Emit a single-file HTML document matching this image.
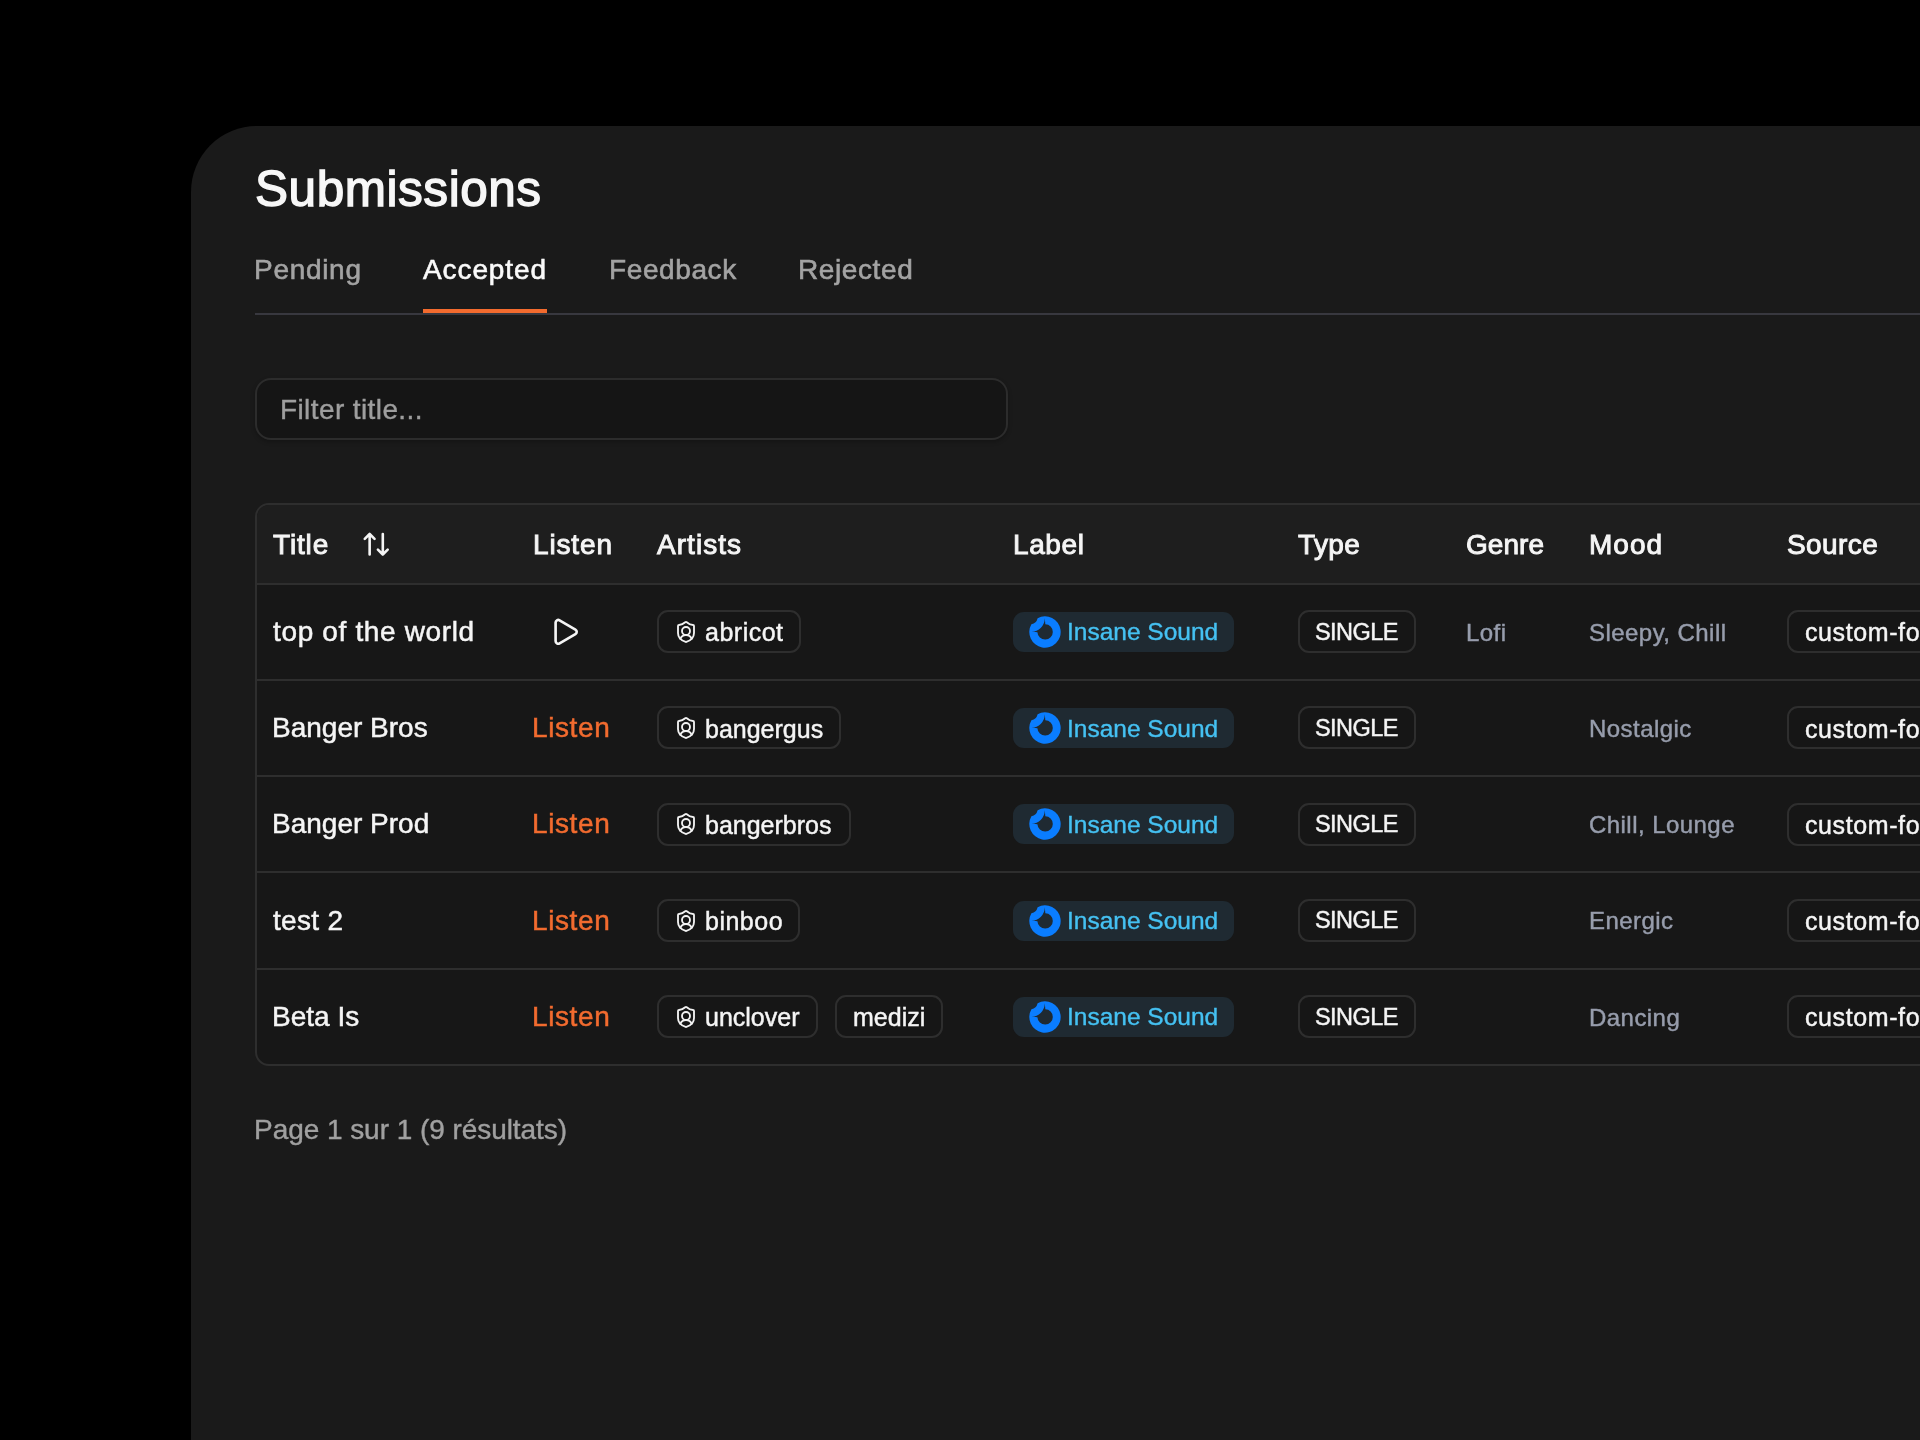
<!DOCTYPE html>
<html>
<head>
<meta charset="utf-8">
<style>
html,body{margin:0;padding:0;}
body{width:1920px;height:1440px;background:#000;overflow:hidden;position:relative;font-family:"Liberation Sans",sans-serif;}
.panel{position:absolute;left:191px;top:126px;width:1800px;height:1400px;background:#1a1a1a;border-top-left-radius:66px;overflow:hidden;}
.a{position:absolute;white-space:nowrap;line-height:1;will-change:transform;}
.title{font-size:49.5px;font-weight:400;color:#f7f7f7;letter-spacing:0.55px;-webkit-text-stroke:1.4px currentColor;}
.tab{font-size:28px;color:#a3a3a3;-webkit-text-stroke:0.6px currentColor;}
.tab.on{color:#fafafa;}
.hd{font-size:28px;font-weight:400;color:#f5f5f5;-webkit-text-stroke:0.95px currentColor;}
.cell{font-size:28px;color:#f5f5f5;-webkit-text-stroke:0.5px currentColor;}
.listen{font-size:28px;color:#f26b2f;-webkit-text-stroke:0.5px currentColor;}
.chip{position:absolute;box-sizing:border-box;border:2px solid #2e2e2e;background:#161616;border-radius:11px;height:43px;}
.ct{font-size:25px;color:#f5f5f5;-webkit-text-stroke:0.45px currentColor;}
.lab{position:absolute;background:#1f2a32;border-radius:11px;height:40px;width:221px;}
.lt{font-size:24.5px;color:#45c1f2;-webkit-text-stroke:0.4px currentColor;}
.gray{font-size:24px;color:#979dac;letter-spacing:0.45px;-webkit-text-stroke:0.45px currentColor;}
</style>
</head>
<body>
<div class="panel"></div>
<!-- header -->
<div class="a title" style="left:255px;top:164px">Submissions</div>
<div class="a tab" style="left:253.5px;top:255.8px;letter-spacing:0.7px">Pending</div>
<div class="a tab on" style="left:423px;top:255.8px;letter-spacing:0.9px">Accepted</div>
<div class="a tab" style="left:608.8px;top:255.8px;letter-spacing:0.6px">Feedback</div>
<div class="a tab" style="left:798px;top:255.8px;letter-spacing:0.6px">Rejected</div>
<div class="a" style="left:255px;top:313px;width:1700px;height:2px;background:#38383f"></div>
<div class="a" style="left:423px;top:309px;width:124px;height:4px;background:#f36b2e"></div>

<!-- filter -->
<div class="a" style="left:255px;top:378px;width:753px;height:62px;box-sizing:border-box;border:2px solid #2c2c2c;border-radius:16px;background:#151515;box-shadow:0 2px 4px rgba(0,0,0,0.25)"></div>
<div class="a" style="left:279.5px;top:396px;font-size:28px;color:#9e9e9e;letter-spacing:0.4px;-webkit-text-stroke:0.4px currentColor">Filter title...</div>

<!-- table -->
<div class="a" style="left:255px;top:503px;width:1700px;height:563px;box-sizing:border-box;border:2px solid #2e2e2e;border-radius:14px;background:#171717;overflow:hidden">
  <div class="a" style="left:0;top:0;width:100%;height:78px;background:#1e1e1e"></div>
  <div class="a" style="left:0;top:78px;width:100%;height:2px;background:#2e2e2e"></div>
  <div class="a" style="left:0;top:174px;width:100%;height:2px;background:#2e2e2e"></div>
  <div class="a" style="left:0;top:270px;width:100%;height:2px;background:#2e2e2e"></div>
  <div class="a" style="left:0;top:366px;width:100%;height:2px;background:#2e2e2e"></div>
  <div class="a" style="left:0;top:463px;width:100%;height:2px;background:#2e2e2e"></div>
</div>

<!-- header cells -->
<div class="a hd" style="left:273px;top:530.8px;letter-spacing:0.85px">Title</div>
<svg class="a" style="left:360px;top:530px" width="32" height="28" viewBox="0 0 32 28" fill="none" stroke="#f5f5f5" stroke-width="2.6" stroke-linecap="round" stroke-linejoin="round">
  <path d="M9.65 24.5V4M4.75 8.9L9.65 4L14.55 8.9"/>
  <path d="M22.8 4V24.5M17.9 19.6L22.8 24.5L27.7 19.6"/>
</svg>
<div class="a hd" style="left:532.75px;top:530.8px;letter-spacing:0.85px">Listen</div>
<div class="a hd" style="left:656.5px;top:530.8px;letter-spacing:1.05px">Artists</div>
<div class="a hd" style="left:1012.6px;top:530.8px;letter-spacing:0.6px">Label</div>
<div class="a hd" style="left:1298px;top:530.8px;letter-spacing:0.35px">Type</div>
<div class="a hd" style="left:1466px;top:530.8px;letter-spacing:0.05px">Genre</div>
<div class="a hd" style="left:1588.8px;top:530.8px;letter-spacing:1.0px">Mood</div>
<div class="a hd" style="left:1786.8px;top:530.8px;letter-spacing:0.4px">Source</div>

<!-- ROWS -->
<div class="a cell" style="left:273px;top:617.9px;letter-spacing:0.65px">top of the world</div>
<svg class="a" style="left:549px;top:615.8px" width="31.7" height="31.7" viewBox="0 0 24 24" fill="none" stroke="#f5f5f5" stroke-width="2" stroke-linecap="round" stroke-linejoin="round"><path d="M5 5a2 2 0 0 1 3.008-1.728l11.997 6.998a2 2 0 0 1 .003 3.458l-12 7A2 2 0 0 1 5 19z"/></svg>
<div class="chip" style="left:657px;top:610px;width:144px"></div>
<svg class="a" style="left:674.2px;top:619.9px" width="24" height="24" viewBox="0 0 24 24" fill="none" stroke="#f2f2f2" stroke-width="1.85" stroke-linecap="round" stroke-linejoin="round"><path d="M20 13c0 5-3.5 7.5-7.66 8.95a1 1 0 0 1-.67-.01C7.5 20.5 4 18 4 13V6a1 1 0 0 1 1-1c2 0 4.5-1.2 6.24-2.72a1.17 1.17 0 0 1 1.52 0C14.51 3.81 17 5 19 5a1 1 0 0 1 1 1z"/><path d="M6.376 18.91a6 6 0 0 1 11.249.003"/><circle cx="12" cy="11" r="4"/></svg>
<div class="a ct" style="left:705.4px;top:620.4px;letter-spacing:0.5px">abricot</div>
<div class="lab" style="left:1013px;top:612px"></div>
<svg class="a" style="left:1028.7px;top:616.0px" width="32" height="32" viewBox="0 0 32 32"><path fill="#0a7dff" fill-rule="evenodd" d="M8.63 2.14A15.7 15.7 0 1 1 2.4 8.15A8 8 0 0 0 8.63 2.14Z M15.8 2.2L16.3 8.2A7.7 7.7 0 1 1 8.41 16.3L2.5 15.6A13.3 13.3 0 0 0 15.8 2.2Z"/></svg>
<div class="a lt" style="left:1067.4px;top:620.3px;letter-spacing:0px">Insane Sound</div>
<div class="chip" style="left:1297.5px;top:610px;width:118px"></div>
<div class="a ct" style="left:1314.6px;top:620.8px;font-size:23.5px;letter-spacing:-0.55px">SINGLE</div>
<div class="a gray" style="left:1465.5px;top:620.8px">Lofi</div>
<div class="a gray" style="left:1589.3px;top:620.8px">Sleepy, Chill</div>
<div class="chip" style="left:1787px;top:610px;width:300px"></div>
<div class="a ct" style="left:1804.5px;top:620.4px;letter-spacing:0.6px">custom-fo</div>
<div class="a cell" style="left:271.5px;top:714.1px;letter-spacing:0px">Banger Bros</div>
<div class="a listen" style="left:532.3px;top:714.1px;letter-spacing:0.6px">Listen</div>
<div class="chip" style="left:657px;top:706px;width:184px"></div>
<svg class="a" style="left:674.2px;top:716.1px" width="24" height="24" viewBox="0 0 24 24" fill="none" stroke="#f2f2f2" stroke-width="1.85" stroke-linecap="round" stroke-linejoin="round"><path d="M20 13c0 5-3.5 7.5-7.66 8.95a1 1 0 0 1-.67-.01C7.5 20.5 4 18 4 13V6a1 1 0 0 1 1-1c2 0 4.5-1.2 6.24-2.72a1.17 1.17 0 0 1 1.52 0C14.51 3.81 17 5 19 5a1 1 0 0 1 1 1z"/><path d="M6.376 18.91a6 6 0 0 1 11.249.003"/><circle cx="12" cy="11" r="4"/></svg>
<div class="a ct" style="left:705.4px;top:716.6px;letter-spacing:0px">bangergus</div>
<div class="lab" style="left:1013px;top:708px"></div>
<svg class="a" style="left:1028.7px;top:712.2px" width="32" height="32" viewBox="0 0 32 32"><path fill="#0a7dff" fill-rule="evenodd" d="M8.63 2.14A15.7 15.7 0 1 1 2.4 8.15A8 8 0 0 0 8.63 2.14Z M15.8 2.2L16.3 8.2A7.7 7.7 0 1 1 8.41 16.3L2.5 15.6A13.3 13.3 0 0 0 15.8 2.2Z"/></svg>
<div class="a lt" style="left:1067.4px;top:716.5px;letter-spacing:0px">Insane Sound</div>
<div class="chip" style="left:1297.5px;top:706px;width:118px"></div>
<div class="a ct" style="left:1314.6px;top:717.0px;font-size:23.5px;letter-spacing:-0.55px">SINGLE</div>
<div class="a gray" style="left:1589.3px;top:717.0px">Nostalgic</div>
<div class="chip" style="left:1787px;top:706px;width:300px"></div>
<div class="a ct" style="left:1804.5px;top:716.6px;letter-spacing:0.6px">custom-fo</div>
<div class="a cell" style="left:271.5px;top:810.3px;letter-spacing:0px">Banger Prod</div>
<div class="a listen" style="left:532.3px;top:810.3px;letter-spacing:0.6px">Listen</div>
<div class="chip" style="left:657px;top:803px;width:194px"></div>
<svg class="a" style="left:674.2px;top:812.2px" width="24" height="24" viewBox="0 0 24 24" fill="none" stroke="#f2f2f2" stroke-width="1.85" stroke-linecap="round" stroke-linejoin="round"><path d="M20 13c0 5-3.5 7.5-7.66 8.95a1 1 0 0 1-.67-.01C7.5 20.5 4 18 4 13V6a1 1 0 0 1 1-1c2 0 4.5-1.2 6.24-2.72a1.17 1.17 0 0 1 1.52 0C14.51 3.81 17 5 19 5a1 1 0 0 1 1 1z"/><path d="M6.376 18.91a6 6 0 0 1 11.249.003"/><circle cx="12" cy="11" r="4"/></svg>
<div class="a ct" style="left:705.4px;top:812.8px;letter-spacing:0px">bangerbros</div>
<div class="lab" style="left:1013px;top:804px"></div>
<svg class="a" style="left:1028.7px;top:808.4px" width="32" height="32" viewBox="0 0 32 32"><path fill="#0a7dff" fill-rule="evenodd" d="M8.63 2.14A15.7 15.7 0 1 1 2.4 8.15A8 8 0 0 0 8.63 2.14Z M15.8 2.2L16.3 8.2A7.7 7.7 0 1 1 8.41 16.3L2.5 15.6A13.3 13.3 0 0 0 15.8 2.2Z"/></svg>
<div class="a lt" style="left:1067.4px;top:812.7px;letter-spacing:0px">Insane Sound</div>
<div class="chip" style="left:1297.5px;top:803px;width:118px"></div>
<div class="a ct" style="left:1314.6px;top:813.2px;font-size:23.5px;letter-spacing:-0.55px">SINGLE</div>
<div class="a gray" style="left:1589.3px;top:813.2px">Chill, Lounge</div>
<div class="chip" style="left:1787px;top:803px;width:300px"></div>
<div class="a ct" style="left:1804.5px;top:812.8px;letter-spacing:0.6px">custom-fo</div>
<div class="a cell" style="left:273px;top:906.5px;letter-spacing:0.3px">test 2</div>
<div class="a listen" style="left:532.3px;top:906.5px;letter-spacing:0.6px">Listen</div>
<div class="chip" style="left:657px;top:899px;width:143px"></div>
<svg class="a" style="left:674.2px;top:908.5px" width="24" height="24" viewBox="0 0 24 24" fill="none" stroke="#f2f2f2" stroke-width="1.85" stroke-linecap="round" stroke-linejoin="round"><path d="M20 13c0 5-3.5 7.5-7.66 8.95a1 1 0 0 1-.67-.01C7.5 20.5 4 18 4 13V6a1 1 0 0 1 1-1c2 0 4.5-1.2 6.24-2.72a1.17 1.17 0 0 1 1.52 0C14.51 3.81 17 5 19 5a1 1 0 0 1 1 1z"/><path d="M6.376 18.91a6 6 0 0 1 11.249.003"/><circle cx="12" cy="11" r="4"/></svg>
<div class="a ct" style="left:705.4px;top:909.0px;letter-spacing:0.5px">binboo</div>
<div class="lab" style="left:1013px;top:901px"></div>
<svg class="a" style="left:1028.7px;top:904.6px" width="32" height="32" viewBox="0 0 32 32"><path fill="#0a7dff" fill-rule="evenodd" d="M8.63 2.14A15.7 15.7 0 1 1 2.4 8.15A8 8 0 0 0 8.63 2.14Z M15.8 2.2L16.3 8.2A7.7 7.7 0 1 1 8.41 16.3L2.5 15.6A13.3 13.3 0 0 0 15.8 2.2Z"/></svg>
<div class="a lt" style="left:1067.4px;top:908.9px;letter-spacing:0px">Insane Sound</div>
<div class="chip" style="left:1297.5px;top:899px;width:118px"></div>
<div class="a ct" style="left:1314.6px;top:909.4px;font-size:23.5px;letter-spacing:-0.55px">SINGLE</div>
<div class="a gray" style="left:1589.3px;top:909.4px">Energic</div>
<div class="chip" style="left:1787px;top:899px;width:300px"></div>
<div class="a ct" style="left:1804.5px;top:909.0px;letter-spacing:0.6px">custom-fo</div>
<div class="a cell" style="left:271.5px;top:1002.7px;letter-spacing:0px">Beta Is</div>
<div class="a listen" style="left:532.3px;top:1002.7px;letter-spacing:0.6px">Listen</div>
<div class="chip" style="left:657px;top:995px;width:161px"></div>
<svg class="a" style="left:674.2px;top:1004.7px" width="24" height="24" viewBox="0 0 24 24" fill="none" stroke="#f2f2f2" stroke-width="1.85" stroke-linecap="round" stroke-linejoin="round"><path d="M20 13c0 5-3.5 7.5-7.66 8.95a1 1 0 0 1-.67-.01C7.5 20.5 4 18 4 13V6a1 1 0 0 1 1-1c2 0 4.5-1.2 6.24-2.72a1.17 1.17 0 0 1 1.52 0C14.51 3.81 17 5 19 5a1 1 0 0 1 1 1z"/><path d="M6.376 18.91a6 6 0 0 1 11.249.003"/><circle cx="12" cy="11" r="4"/></svg>
<div class="a ct" style="left:705.4px;top:1005.2px;letter-spacing:0px">unclover</div>
<div class="chip" style="left:834.5px;top:995px;width:108px"></div>
<div class="a ct" style="left:852.5px;top:1005.2px">medizi</div>
<div class="lab" style="left:1013px;top:997px"></div>
<svg class="a" style="left:1028.7px;top:1000.8px" width="32" height="32" viewBox="0 0 32 32"><path fill="#0a7dff" fill-rule="evenodd" d="M8.63 2.14A15.7 15.7 0 1 1 2.4 8.15A8 8 0 0 0 8.63 2.14Z M15.8 2.2L16.3 8.2A7.7 7.7 0 1 1 8.41 16.3L2.5 15.6A13.3 13.3 0 0 0 15.8 2.2Z"/></svg>
<div class="a lt" style="left:1067.4px;top:1005.1px;letter-spacing:0px">Insane Sound</div>
<div class="chip" style="left:1297.5px;top:995px;width:118px"></div>
<div class="a ct" style="left:1314.6px;top:1005.6px;font-size:23.5px;letter-spacing:-0.55px">SINGLE</div>
<div class="a gray" style="left:1589.3px;top:1005.6px">Dancing</div>
<div class="chip" style="left:1787px;top:995px;width:300px"></div>
<div class="a ct" style="left:1804.5px;top:1005.2px;letter-spacing:0.6px">custom-fo</div>
<div class="a" style="left:254px;top:1115.5px;font-size:28px;color:#a0a0a0;letter-spacing:-0.05px;-webkit-text-stroke:0.4px currentColor">Page 1 sur 1 (9 résultats)</div>
</body>
</html>
